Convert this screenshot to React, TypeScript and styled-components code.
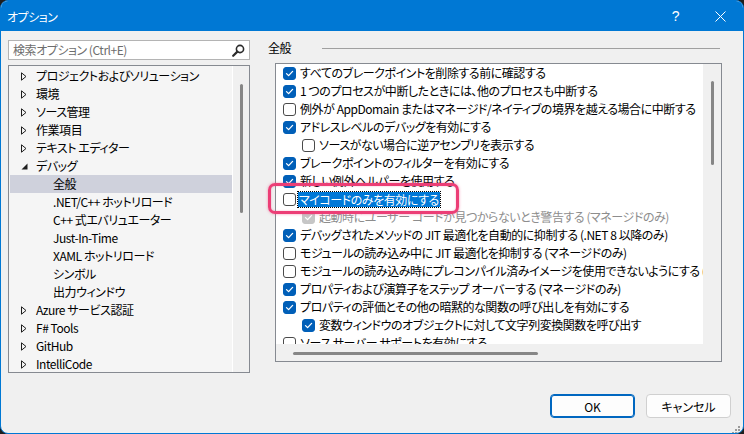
import React from "react";
import styled, { createGlobalStyle, css } from "styled-components";

const Global = createGlobalStyle`
  html, body { margin: 0; padding: 0; background: #1e1e1e; }
  body {
    font-family: "Noto Sans CJK JP", "Noto Sans", sans-serif;
    font-size: 12px;
    font-feature-settings: "palt";
    letter-spacing: -0.45px;
    color: #000;
  }
  * { box-sizing: border-box; }
`;

const Window = styled.div`
  width: 744px;
  height: 434px;
  display: flex;
  flex-direction: column;
  border: 1px solid #0078d4;
  border-radius: 8px;
  overflow: hidden;
  background: #f0f0f0;
  position: relative;
`;

const TitleBar = styled.div`
  height: 30px;
  background: #0078d4;
  color: #fff;
  display: flex;
  align-items: center;
  padding-left: 6px;
  flex-shrink: 0;
`;

const Title = styled.div`
  flex: 1;
  font-size: 12px;
  letter-spacing: -0.5px;
`;

const TitleButton = styled.div`
  width: 45px;
  height: 30px;
  display: flex;
  align-items: center;
  justify-content: center;
  font-family: "Liberation Sans", sans-serif;
  font-size: 14px;
  font-weight: 300;
`;

const Body = styled.div`
  flex: 1;
  display: flex;
  flex-direction: column;
  padding: 9px 0 0 7px;
`;

const Main = styled.div`
  display: flex;
  gap: 18px;
`;

const LeftCol = styled.div`
  width: 242px;
  display: flex;
  flex-direction: column;
  gap: 5px;
`;

const Search = styled.div`
  height: 20px;
  background: #fff;
  border: 1px solid #b4b4b4;
  display: flex;
  align-items: center;
  padding: 0 4px 0 4px;
  color: #6d6d6d;
`;

const SearchText = styled.span`
  flex: 1;
  line-height: 18px;
`;

const Tree = styled.div`
  height: 308px;
  border: 1px solid #868a91;
  background: #f5f5f5;
  display: flex;
`;

const TreeList = styled.div`
  flex: 1;
  padding: 1px 0 0 1px;
  overflow: hidden;
  border-right: 1px solid #fff;
`;

const TreeRow = styled.div<{ $level: number; $selected?: boolean }>`
  height: 18px;
  display: flex;
  align-items: center;
  white-space: nowrap;
  padding-left: ${(p) => (p.$level === 0 ? 10 : 43)}px;
  background: ${(p) => (p.$selected ? "#cfd1dc" : "transparent")};
`;

const Twisty = styled.span`
  width: 15px;
  height: 18px;
  display: flex;
  align-items: center;
  margin-left: 1px;
`;

const TreeLabel = styled.span`
  line-height: 18px;
`;

const VScroll = styled.div<{ $w: number; $pad: number; $thumb: number }>`
  width: ${(p) => p.$w}px;
  background: #f0f0f0;
  display: flex;
  flex-direction: column;
  align-items: center;
  padding-top: ${(p) => p.$pad}px;
  flex-shrink: 0;
  &::before {
    content: "";
    width: 3px;
    height: ${(p) => p.$thumb}px;
    border-radius: 2px;
    background: #868686;
    margin-left: 1px;
  }
`;

const RightCol = styled.div`
  width: 454px;
  display: flex;
  flex-direction: column;
  position: relative;
`;

const GroupHeader = styled.div`
  height: 16px;
  display: flex;
  align-items: center;
  margin-bottom: 7px;
`;

const GroupTitle = styled.span`
  line-height: 16px;
`;

const GroupLine = styled.div`
  flex: 1;
  height: 1px;
  background: #a0a0a0;
  margin: 0 2px 0 31px;
`;

const OptionsBox = styled.div`
  margin-left: 7px;
  width: 447px;
  height: 299px;
  border: 1px solid #868a91;
  display: grid;
  grid-template-columns: 1fr 18px;
  grid-template-rows: 1fr 17px;
`;

const OptionsList = styled.div`
  background: #fff;
  overflow: hidden;
  padding-top: 0;
`;

const HScroll = styled.div`
  background: #f0f0f0;
  display: flex;
  align-items: center;
  padding-left: 17px;
  padding-top: 1px;
  &::before {
    content: "";
    width: 245px;
    height: 3px;
    border-radius: 2px;
    background: #868686;
  }
`;

const Corner = styled.div`
  background: #f0f0f0;
`;

const OptionRow = styled.div<{ $nested?: boolean; $disabled?: boolean }>`
  height: 18px;
  display: flex;
  align-items: center;
  white-space: nowrap;
  padding-left: ${(p) => (p.$nested ? 26 : 7)}px;
  color: ${(p) => (p.$disabled ? "#8d8d8d" : "#000")};
`;

const Box = styled.span<{ $checked?: boolean; $disabled?: boolean }>`
  width: 13px;
  height: 13px;
  border-radius: 3px;
  flex-shrink: 0;
  margin-right: 4px;
  display: flex;
  align-items: center;
  justify-content: center;
  ${(p) =>
    p.$checked
      ? css`
          background: ${p.$disabled ? "#c6c6c6" : "#005fb8"};
          border: 1px solid ${p.$disabled ? "#c6c6c6" : "#005fb8"};
        `
      : css`
          background: #fff;
          border: 1px solid #4a4a4a;
        `}
`;

const OptionLabel = styled.span<{ $selected?: boolean }>`
  line-height: 14px;
  ${(p) =>
    p.$selected &&
    css`
      background: #0078d7;
      color: #fff;
      outline: 1px dotted #000;
      padding: 0 1px;
      margin-left: -2px;
      line-height: 15px;
    `}
`;

const Highlight = styled.div`
  position: absolute;
  left: 0;
  top: 143px;
  width: 191px;
  height: 31px;
  border: 3px solid #ec3e76;
  border-radius: 7px;
  box-shadow: 0 0 3px rgba(236, 62, 118, 0.55), inset 0 0 2px rgba(236, 62, 118, 0.4);
  pointer-events: none;
`;

const Footer = styled.div`
  display: flex;
  justify-content: flex-end;
  gap: 11px;
  margin-top: 21px;
  padding-right: 12px;
`;

const Button = styled.div<{ $primary?: boolean }>`
  width: 85px;
  height: 24px;
  border-radius: 4px;
  background: #fdfdfd;
  display: flex;
  align-items: center;
  justify-content: center;
  font-size: 12px;
  letter-spacing: 0;
  ${(p) =>
    p.$primary
      ? css`
          border: 1px solid #0067c0;
          box-shadow: inset 0 0 0 1px #0067c0;
        `
      : css`
          border: 1px solid #d0d0d0;
        `}
`;

const Grip = styled.div`
  position: absolute;
  right: 2px;
  bottom: 2px;
  width: 10px;
  height: 10px;
`;

const Check = () => (
  <svg width="9" height="9" viewBox="0 0 9 9">
    <path d="M1.5 4.6 L3.6 6.6 L7.6 2.4" fill="none" stroke="#fff" strokeWidth="1.3" strokeLinecap="round" strokeLinejoin="round" />
  </svg>
);

const Collapsed = () => (
  <svg width="6" height="9" viewBox="0 0 6 9">
    <path d="M0.5 0.8 L5 4.5 L0.5 8.2 Z" fill="none" stroke="#1e1e1e" strokeWidth="1" strokeLinejoin="miter" />
  </svg>
);

const Expanded = () => (
  <svg width="7" height="7" viewBox="0 0 7 7">
    <path d="M6.5 0.5 L6.5 6.5 L0.5 6.5 Z" fill="#1e1e1e" />
  </svg>
);

type TreeItem = { label: string; level: number; state?: "c" | "e"; selected?: boolean };

const treeItems: TreeItem[] = [
  { label: "プロジェクトおよびソリューション", level: 0, state: "c" },
  { label: "環境", level: 0, state: "c" },
  { label: "ソース管理", level: 0, state: "c" },
  { label: "作業項目", level: 0, state: "c" },
  { label: "テキスト エディター", level: 0, state: "c" },
  { label: "デバッグ", level: 0, state: "e" },
  { label: "全般", level: 1, selected: true },
  { label: ".NET/C++ ホットリロード", level: 1 },
  { label: "C++ 式エバリュエーター", level: 1 },
  { label: "Just-In-Time", level: 1 },
  { label: "XAML ホットリロード", level: 1 },
  { label: "シンボル", level: 1 },
  { label: "出力ウィンドウ", level: 1 },
  { label: "Azure サービス認証", level: 0, state: "c" },
  { label: "F# Tools", level: 0, state: "c" },
  { label: "GitHub", level: 0, state: "c" },
  { label: "IntelliCode", level: 0, state: "c" },
];

type Opt = { label: string; checked: boolean; nested?: boolean; disabled?: boolean; selected?: boolean };

const options: Opt[] = [
  { label: "すべてのブレークポイントを削除する前に確認する", checked: true },
  { label: "1 つのプロセスが中断したときには、他のプロセスも中断する", checked: true },
  { label: "例外が AppDomain またはマネージド/ネイティブの境界を越える場合に中断する", checked: false },
  { label: "アドレスレベルのデバッグを有効にする", checked: true },
  { label: "ソースがない場合に逆アセンブリを表示する", checked: false, nested: true },
  { label: "ブレークポイントのフィルターを有効にする", checked: true },
  { label: "新しい例外ヘルパーを使用する", checked: true },
  { label: "マイコードのみを有効にする", checked: false, selected: true },
  { label: "起動時にユーザー コードが見つからないとき警告する (マネージドのみ)", checked: true, nested: true, disabled: true },
  { label: "デバッグされたメソッドの JIT 最適化を自動的に抑制する (.NET 8 以降のみ)", checked: true },
  { label: "モジュールの読み込み中に JIT 最適化を抑制する (マネージドのみ)", checked: false },
  { label: "モジュールの読み込み時にプレコンパイル済みイメージを使用できないようにする (ネイティブのみ)", checked: false },
  { label: "プロパティおよび演算子をステップ オーバーする (マネージドのみ)", checked: true },
  { label: "プロパティの評価とその他の暗黙的な関数の呼び出しを有効にする", checked: true },
  { label: "変数ウィンドウのオブジェクトに対して文字列変換関数を呼び出す", checked: true, nested: true },
  { label: "ソース サーバー サポートを有効にする", checked: false },
];

export default function App() {
  return (
    <>
      <Global />
      <Window>
        <TitleBar>
          <Title>オプション</Title>
          <TitleButton>?</TitleButton>
          <TitleButton>
            <svg width="11" height="11" viewBox="0 0 11 11">
              <path d="M0.5 0.5 L10.5 10.5 M10.5 0.5 L0.5 10.5" stroke="#fff" strokeWidth="1" />
            </svg>
          </TitleButton>
        </TitleBar>
        <Body>
          <Main>
            <LeftCol>
              <Search>
                <SearchText>検索オプション (Ctrl+E)</SearchText>
                <svg width="13" height="13" viewBox="0 0 13 13">
                  <circle cx="8" cy="5" r="3.6" fill="none" stroke="#2b2b2b" strokeWidth="1.6" />
                  <path d="M5.4 7.6 L1.2 11.8" stroke="#2b2b2b" strokeWidth="2.2" strokeLinecap="round" />
                </svg>
              </Search>
              <Tree>
                <TreeList>
                  {treeItems.map((t) => (
                    <TreeRow key={t.label} $level={t.level} $selected={t.selected}>
                      {t.level === 0 && (
                        <Twisty>{t.state === "e" ? <Expanded /> : <Collapsed />}</Twisty>
                      )}
                      <TreeLabel>{t.label}</TreeLabel>
                    </TreeRow>
                  ))}
                </TreeList>
                <VScroll $w={16} $pad={18} $thumb={129} />
              </Tree>
            </LeftCol>
            <RightCol>
              <GroupHeader>
                <GroupTitle>全般</GroupTitle>
                <GroupLine />
              </GroupHeader>
              <OptionsBox>
                <OptionsList>
                  {options.map((o) => (
                    <OptionRow key={o.label} $nested={o.nested} $disabled={o.disabled}>
                      <Box $checked={o.checked} $disabled={o.disabled}>
                        {o.checked && <Check />}
                      </Box>
                      <OptionLabel $selected={o.selected}>{o.label}</OptionLabel>
                    </OptionRow>
                  ))}
                </OptionsList>
                <VScroll $w={18} $pad={17} $thumb={84} />
                <HScroll />
                <Corner />
              </OptionsBox>
              <Highlight />
            </RightCol>
          </Main>
          <Footer>
            <Button $primary>OK</Button>
            <Button>キャンセル</Button>
          </Footer>
        </Body>
        <Grip>
          <svg width="10" height="10" viewBox="0 0 10 10">
            {[
              [8, 2],
              [8, 5],
              [5, 5],
              [8, 8],
              [5, 8],
              [2, 8],
            ].map(([x, y]) => (
              <rect key={`${x}-${y}`} x={x - 1} y={y - 1} width="2" height="2" fill="#9a9a9a" />
            ))}
          </svg>
        </Grip>
      </Window>
    </>
  );
}
